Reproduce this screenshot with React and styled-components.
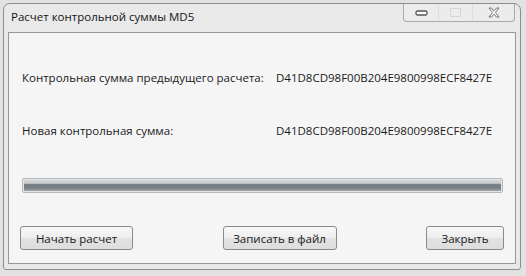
import styled, { createGlobalStyle } from "styled-components";

const Global = createGlobalStyle`
  html, body {
    margin: 0;
    padding: 0;
    background: #e2e2e2;
  }
  body {
    width: 526px;
    height: 276px;
    overflow: hidden;
    font-family: "Segoe UI", "Open Sans", "Noto Sans", sans-serif;
    color: #1a1a1a;
  }
`;

const Window = styled.div`
  box-sizing: border-box;
  margin: 3px 0 0 3px;
  width: 518px;
  height: 267px;
  border: 1px solid #8c8c8c;
  border-radius: 7px 7px 3px 3px;
  background: #e9e9ea;
  display: flex;
  flex-direction: column;
`;

const TitleBar = styled.div`
  height: 28px;
  display: flex;
  align-items: flex-start;
  padding-left: 7px;
`;

const Title = styled.span`
  margin-top: 4px;
  font-size: 11.5px;
  line-height: 17px;
  color: #151515;
`;

const Controls = styled.div`
  margin-left: auto;
  margin-right: 5px;
  display: flex;
  height: 17px;
  border: 1px solid #a9a9a9;
  border-top: none;
  border-radius: 0 0 4px 4px;
  background: #ececec;
`;

// one caption button, the close one is wider
const CaptionButton = styled.div`
  width: ${(p) => p.$w}px;
  display: flex;
  align-items: center;
  justify-content: center;
  border-left: ${(p) => (p.$first ? "none" : "1px solid #dedede")};
`;

const Client = styled.div`
  box-sizing: border-box;
  margin: 0 4px 5px 4px;
  flex: 1;
  border: 1px solid #979797;
  background: #f5f5f6;
  display: flex;
  flex-direction: column;
  padding: 36px 12px 0 13px;
`;

const Row = styled.div`
  display: grid;
  grid-template-columns: 254px 1fr;
  height: 16px;
  align-items: center;
  font-size: 11.5px;
  margin-bottom: ${(p) => p.$gap}px;
`;

const Label = styled.span`
  white-space: nowrap;
`;

const Hash = styled.span`
  white-space: nowrap;
`;

const Progress = styled.div`
  box-sizing: border-box;
  height: 15px;
  border: 1px solid #b8b8b8;
  border-radius: 2px;
  background: #e4e4e4;
  padding: 1px;
`;

const Fill = styled.div`
  height: 100%;
  background: linear-gradient(
    to bottom,
    #d3d6d8 0%,
    #c8cbce 30%,
    #737a81 42%,
    #7d848a 78%,
    #a4a8ac 100%
  );
`;

const ButtonRow = styled.div`
  display: flex;
  justify-content: space-between;
  margin: 33px -1px 0 -2px;
`;

const Button = styled.button`
  box-sizing: border-box;
  width: ${(p) => p.$w}px;
  height: 24px;
  border: 1px solid #8a8a8a;
  border-radius: 3px;
  background: linear-gradient(to bottom, #f8f8f8 0%, #ededed 50%, #e2e2e2 51%, #dedede 100%);
  font-family: inherit;
  font-size: 11.5px;
  color: #1a1a1a;
  padding: 0;
`;

export default function App() {
  return (
    <>
      <Global />
      <Window>
        <TitleBar>
          <Title>Расчет контрольной суммы MD5</Title>
          <Controls>
            <CaptionButton $w={34} $first>
              <svg width="13" height="6" viewBox="0 0 13 6">
                <rect x="1" y="1" width="11" height="4" rx="1.5" fill="#fff" stroke="#555" strokeWidth="1.3" />
              </svg>
            </CaptionButton>
            <CaptionButton $w={33}>
              <svg width="11" height="9" viewBox="0 0 11 9">
                <rect x="0.5" y="0.5" width="10" height="8" fill="none" stroke="#d6d6d6" />
              </svg>
            </CaptionButton>
            <CaptionButton $w={41}>
              <svg width="12" height="11" viewBox="0 0 12 11">
                <path
                  d="M1 1 H3.5 L6 3.8 L8.5 1 H11 L7.5 5.5 L11 10 H8.5 L6 7.2 L3.5 10 H1 L4.5 5.5 Z"
                  fill="#f4f4f4"
                  stroke="#6a6a6a"
                  strokeWidth="0.9"
                  strokeLinejoin="round"
                />
              </svg>
            </CaptionButton>
          </Controls>
        </TitleBar>
        <Client>
          <Row $gap={37}>
            <Label>Контрольная сумма предыдущего расчета:</Label>
            <Hash>D41D8CD98F00B204E9800998ECF8427E</Hash>
          </Row>
          <Row $gap={40}>
            <Label>Новая контрольная сумма:</Label>
            <Hash>D41D8CD98F00B204E9800998ECF8427E</Hash>
          </Row>
          <Progress>
            <Fill />
          </Progress>
          <ButtonRow>
            <Button $w={113}>Начать расчет</Button>
            <Button $w={114}>Записать в файл</Button>
            <Button $w={78}>Закрыть</Button>
          </ButtonRow>
        </Client>
      </Window>
    </>
  );
}
